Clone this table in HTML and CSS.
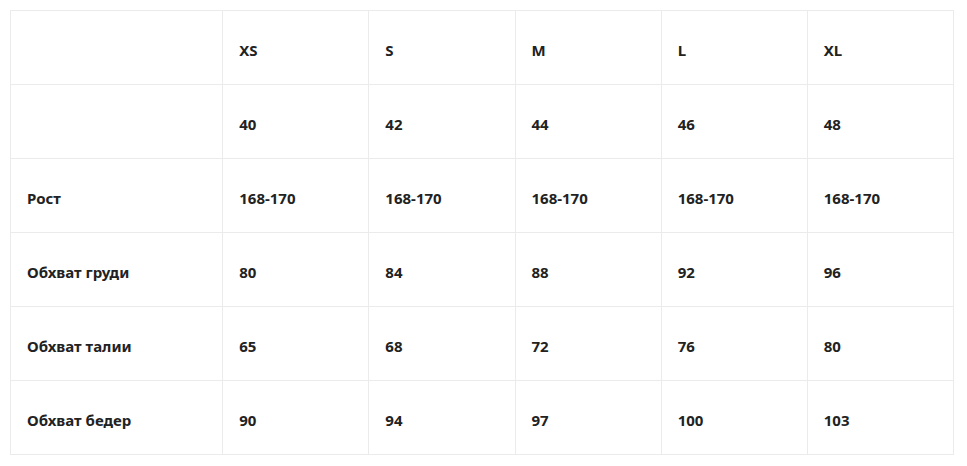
FILE: index.html
```html
<!DOCTYPE html>
<html lang="ru">
<head>
<meta charset="utf-8">
<link rel="stylesheet" href="styles.css">
</head>
<body>
<table class="sizes">
  <colgroup>
    <col class="c-label"><col class="c"><col class="c"><col class="c"><col class="c"><col class="c">
  </colgroup>
  <tr><td></td><td>XS</td><td>S</td><td>M</td><td>L</td><td>XL</td></tr>
  <tr><td></td><td>40</td><td>42</td><td>44</td><td>46</td><td>48</td></tr>
  <tr><td>Рост</td><td>168-170</td><td>168-170</td><td>168-170</td><td>168-170</td><td>168-170</td></tr>
  <tr><td>Обхват груди</td><td>80</td><td>84</td><td>88</td><td>92</td><td>96</td></tr>
  <tr><td>Обхват талии</td><td>65</td><td>68</td><td>72</td><td>76</td><td>80</td></tr>
  <tr><td>Обхват бедер</td><td>90</td><td>94</td><td>97</td><td>100</td><td>103</td></tr>
</table>
</body>
</html>
```
FILE: styles.css
```css
html, body {
  margin: 0;
  background: #fff;
}
body {
  padding: 10px 0 0 10px;
}
.sizes {
  border-collapse: collapse;
  table-layout: fixed;
  width: 944px;
  font-family: "Noto Sans", "Open Sans", sans-serif;
  font-weight: 700;
  font-size: 15px;
  color: #222;
}
.c-label { width: 212px; }
.c { width: 146px; }
.sizes td {
  border: 1px solid #ebebeb;
  height: 74px;
  padding: 4px 16px 0;
  box-sizing: border-box;
  vertical-align: middle;
  text-align: left;
  line-height: 20px;
}
```
